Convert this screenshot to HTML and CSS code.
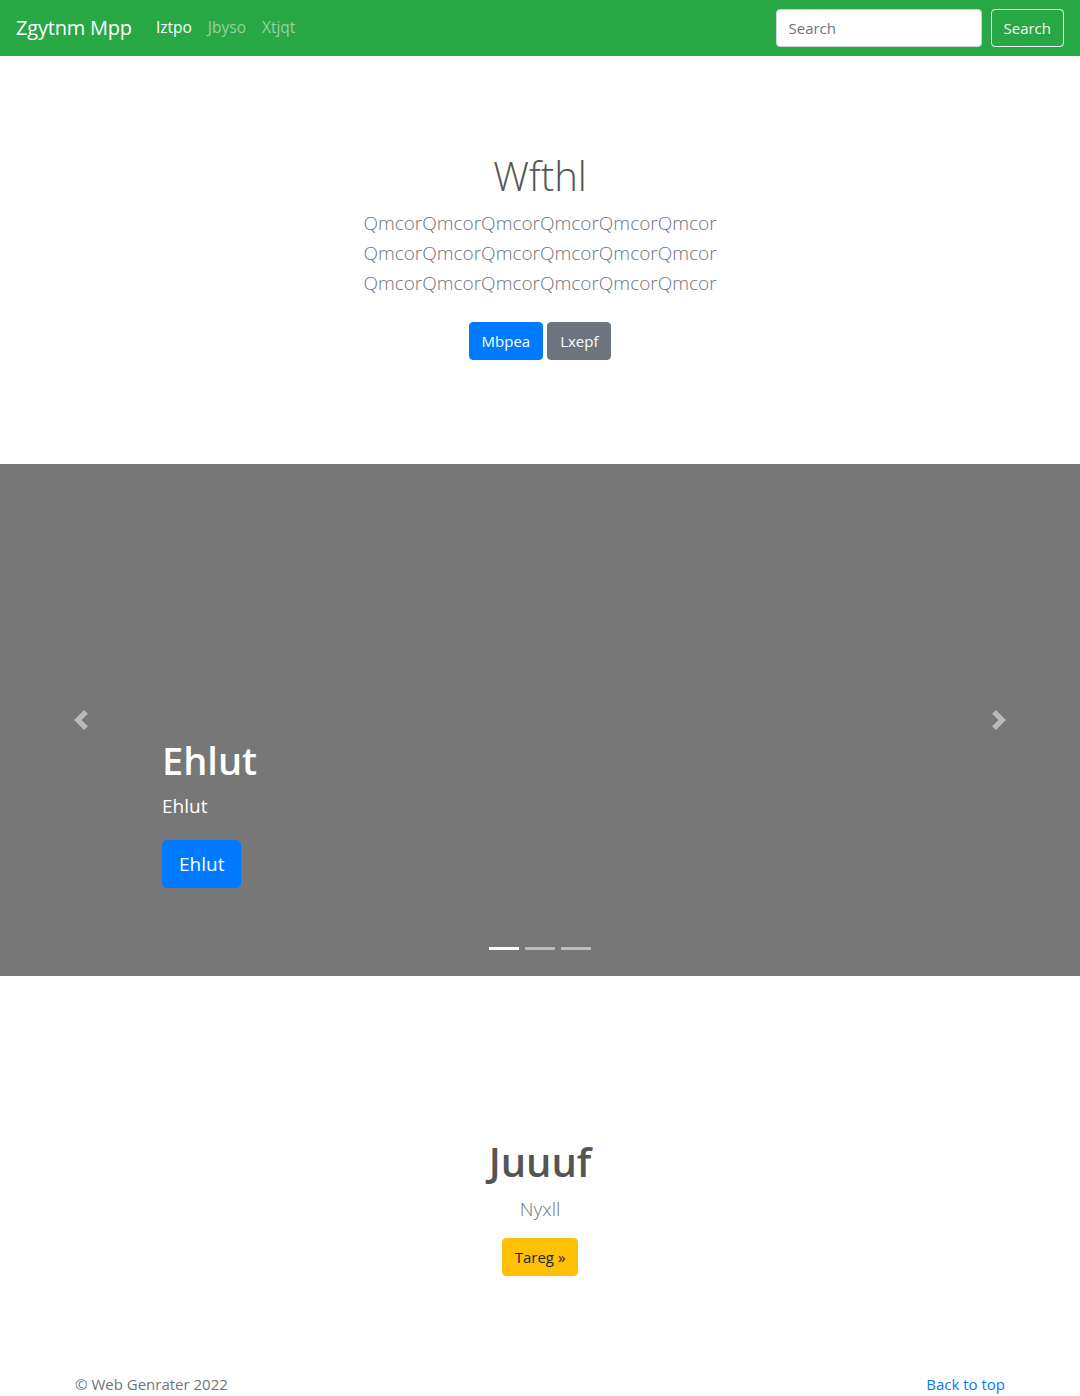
FILE: index.html
```html
<!DOCTYPE html>
<html lang="en">
<head>
<meta charset="utf-8">
<title>Zgytnm Mpp</title>
<link rel="stylesheet" href="styles.css">
</head>
<body>
<header class="navbar">
  <a class="brand" href="#">Zgytnm Mpp</a>
  <nav class="nav">
    <a class="nav-link active" href="#">Iztpo</a>
    <a class="nav-link" href="#">Jbyso</a>
    <a class="nav-link" href="#">Xtjqt</a>
  </nav>
  <form class="search-form">
    <input class="search-input" type="text" placeholder="Search">
    <button class="btn btn-outline-light" type="button">Search</button>
  </form>
</header>

<section class="hero">
  <div class="hero-inner">
    <h1 class="hero-title">Wfthl</h1>
    <p class="lead">QmcorQmcorQmcorQmcorQmcorQmcor QmcorQmcorQmcorQmcorQmcorQmcor QmcorQmcorQmcorQmcorQmcorQmcor</p>
    <p class="hero-buttons">
      <a href="#" class="btn btn-primary">Mbpea</a>
      <a href="#" class="btn btn-secondary">Lxepf</a>
    </p>
  </div>
</section>

<section class="carousel">
  <a class="carousel-control prev" href="#">
    <svg width="20" height="20" viewBox="0 0 8 8"><path fill="#fff" d="M5.25 0l-4 4 4 4 1.5-1.5L4.25 4l2.5-2.5L5.25 0z"/></svg>
  </a>
  <div class="carousel-caption">
    <h2 class="caption-title">Ehlut</h2>
    <p class="caption-text">Ehlut</p>
    <p class="caption-action"><a href="#" class="btn btn-primary btn-lg">Ehlut</a></p>
  </div>
  <a class="carousel-control next" href="#">
    <svg width="20" height="20" viewBox="0 0 8 8"><path fill="#fff" d="M2.75 0l-1.5 1.5L3.75 4l-2.5 2.5L2.75 8l4-4-4-4z"/></svg>
  </a>
  <ol class="indicators">
    <li class="indicator active"></li>
    <li class="indicator"></li>
    <li class="indicator"></li>
  </ol>
</section>

<section class="feature">
  <h2 class="feature-title">Juuuf</h2>
  <p class="feature-lead">Nyxll</p>
  <p class="feature-action"><a href="#" class="btn btn-warning">Tareg &raquo;</a></p>
</section>

<footer class="footer">
  <div class="footer-inner">
    <p class="footer-copy">&copy; Web Genrater 2022</p>
    <p class="footer-top"><a href="#">Back to top</a></p>
  </div>
</footer>
</body>
</html>
```

FILE: styles.css
```css
* { box-sizing: border-box; }

body {
  margin: 0;
  font-family: "Open Sans", "Noto Sans", "Liberation Sans", sans-serif;
  font-size: 16px;
  line-height: 1.5;
  color: #212529;
  background: #fff;
}

a { text-decoration: none; }

.navbar {
  height: 56px;
  background: #28a745;
  display: flex;
  align-items: center;
  padding: 0 16px;
}

.brand {
  color: #fff;
  font-size: 20px;
  line-height: 30px;
  margin-right: 16px;
  letter-spacing: -0.2px;
}

.nav {
  display: flex;
  flex: 1;
}

.nav-link {
  color: rgba(255, 255, 255, 0.5);
  padding: 8px;
  font-size: 15.5px;
}

.nav-link.active { color: #fff; }

.search-form {
  display: flex;
  align-items: center;
}

.search-input {
  width: 206px;
  height: 38px;
  padding: 6px 12px;
  font: inherit;
  font-size: 15px;
  color: #495057;
  border: 1px solid #ced4da;
  border-radius: 4px;
  margin-right: 9px;
}

.search-input::placeholder { color: #6c757d; }

.btn {
  display: inline-block;
  font: inherit;
  font-size: 15px;
  line-height: 24px;
  padding: 6px 12px;
  border: 1px solid transparent;
  border-radius: 4px;
  cursor: pointer;
  text-align: center;
}

.btn-outline-light {
  color: #f8f9fa;
  background: transparent;
  border-color: #f8f9fa;
}

.btn-primary { color: #fff; background: #007bff; border-color: #007bff; }
.btn-secondary { color: #fff; background: #6c757d; border-color: #6c757d; }
.btn-warning { color: #212529; background: #ffc107; border-color: #ffc107; }

.btn-lg {
  font-size: 19px;
  line-height: 30px;
  padding: 8px 16px;
  border-radius: 5px;
}

.hero {
  padding: 96px 0 96px;
  text-align: center;
}

.hero-inner {
  width: 450px;
  margin: 0 auto;
}

.hero-title {
  margin: 0 0 8px;
  font-size: 40px;
  line-height: 48px;
  font-weight: 300;
  color: #555;
}

.lead {
  margin: 0 0 16px;
  font-size: 19px;
  line-height: 30px;
  font-weight: 300;
  color: #6c757d;
}

.hero-buttons {
  margin: 0;
  display: flex;
  justify-content: center;
  gap: 4px;
}

.hero-buttons .btn { margin: 8px 0; }

.carousel {
  position: relative;
  height: 512px;
  background: #777;
}

.carousel-control {
  position: absolute;
  top: 0;
  bottom: 0;
  width: 15%;
  display: flex;
  align-items: center;
  justify-content: center;
  opacity: 0.5;
}

.carousel-control.prev { left: 0; }
.carousel-control.next { right: 0; }

.carousel-caption {
  position: absolute;
  left: 15%;
  right: 15%;
  bottom: 48px;
  padding: 20px 0;
  color: #fff;
}

.caption-title {
  margin: 0 0 8px;
  font-size: 38px;
  line-height: 48px;
  font-weight: 600;
}

.caption-text {
  margin: 0 0 20px;
  font-size: 19px;
  line-height: 28px;
}

.caption-action { margin: 0 0 20px; }

.indicators {
  position: absolute;
  left: 0;
  right: 0;
  bottom: 26px;
  margin: 0;
  padding: 0;
  list-style: none;
  display: flex;
  justify-content: center;
  gap: 6px;
}

.indicator {
  width: 30px;
  height: 3px;
  background: #fff;
  opacity: 0.5;
}

.indicator.active { opacity: 1; }

.feature {
  padding: 162px 0 48px;
  text-align: center;
}

.feature-title {
  margin: 0 0 8px;
  font-size: 40px;
  line-height: 48px;
  font-weight: 600;
  color: #555;
}

.feature-lead {
  margin: 0 0 14px;
  font-size: 19px;
  line-height: 30px;
  font-weight: 300;
  color: #6c757d;
}

.feature-action { margin: 0; }

.footer {
  padding: 48px 0;
  color: #6c757d;
}

.footer-inner {
  width: 930px;
  margin: 0 auto;
  display: flex;
  justify-content: space-between;
}

.footer-inner p { margin: 0 0 4px; line-height: 24px; font-size: 15px; }

.footer-top a { color: #007bff; }
```
